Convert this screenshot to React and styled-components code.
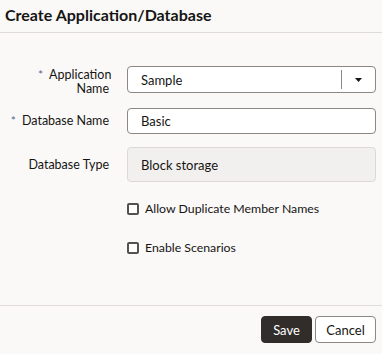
import styled, { createGlobalStyle } from 'styled-components';

const GlobalStyle = createGlobalStyle`
  html, body {
    margin: 0;
    padding: 0;
    background: #faf9f8;
  }
  body {
    font-family: Lato, 'Noto Sans', sans-serif;
    color: #161513;
  }
`;

const fields = [
  { label: 'Application Name', required: true, value: 'Sample', kind: 'select', wrap: true },
  { label: 'Database Name', required: true, value: 'Basic', kind: 'input' },
  { label: 'Database Type', required: false, value: 'Block storage', kind: 'readonly' },
];

const options = ['Allow Duplicate Member Names', 'Enable Scenarios'];

export default function App() {
  return (
    <>
      <GlobalStyle />
      <SDialog>
        <SHeader>
          <STitle>Create Application/Database</STitle>
        </SHeader>
        <SBody>
          {fields.map((field) => (
            <SRow key={field.label} $kind={field.kind}>
              <SLabel $wrap={field.wrap}>
                {field.required && <SStar>*</SStar>}
                <span>{field.label}</span>
              </SLabel>
              <SField $kind={field.kind}>
                <SValue>{field.value}</SValue>
                {field.kind === 'select' && (
                  <SDropButton>
                    <svg width="7" height="4" viewBox="0 0 7 4">
                      <path d="M0 0h7L3.5 4z" fill="#161513" />
                    </svg>
                  </SDropButton>
                )}
              </SField>
            </SRow>
          ))}
          <SChecks>
            {options.map((opt) => (
              <SCheckRow key={opt}>
                <SBox />
                <span>{opt}</span>
              </SCheckRow>
            ))}
          </SChecks>
        </SBody>
        <SFooter>
          <SButton $primary>Save</SButton>
          <SButton>Cancel</SButton>
        </SFooter>
      </SDialog>
    </>
  );
}

const heights = { select: '27px', input: '26px', readonly: '35px' };
const gaps = { select: '15px', input: '13px', readonly: '0' };

const SDialog = styled.div`
  width: 382px;
  height: 354px;
  display: flex;
  flex-direction: column;
`;

const SHeader = styled.div`
  height: 33px;
  padding: 0 5px;
  display: flex;
  align-items: center;
  border-bottom: 1px solid #dfdcd8;
  box-sizing: border-box;
`;

const STitle = styled.h1`
  margin: 0;
  margin-top: -3px;
  font-size: 16px;
  font-weight: 700;
`;

const SBody = styled.div`
  flex: 1;
  padding: 33px 6px 0 0;
  border-bottom: 1px solid #dfdcd8;
`;

const SRow = styled.div`
  display: grid;
  grid-template-columns: 109px 1fr;
  grid-template-rows: ${(p) => heights[p.$kind]};
  column-gap: 18px;
  align-items: center;
  margin-bottom: ${(p) => gaps[p.$kind]};
`;

const SLabel = styled.div`
  font-size: 12.5px;
  line-height: 14px;
  text-align: right;
  padding-left: ${(p) => (p.$wrap ? '38px' : '0')};
  align-self: ${(p) => (p.$wrap ? 'start' : 'center')};
  margin-top: ${(p) => (p.$wrap ? '2px' : '0')};
`;

const SStar = styled.span`
  color: #4f6b88;
  margin-right: 6px;
  font-size: 12px;
`;

const SField = styled.div`
  height: 100%;
  box-sizing: border-box;
  border: 1px solid ${(p) => (p.$kind === 'readonly' ? '#dcd9d5' : '#8b8782')};
  border-radius: 4px;
  background: ${(p) => (p.$kind === 'readonly' ? '#f2f0ee' : '#ffffff')};
  display: flex;
  align-items: center;
  padding-left: 13px;
`;

const SValue = styled.span`
  flex: 1;
  font-size: 13px;
`;

const SDropButton = styled.div`
  width: 33px;
  height: 19px;
  border-left: 1px solid #8b8782;
  display: flex;
  align-items: center;
  justify-content: center;
`;

const SChecks = styled.div`
  padding-left: 127px;
  padding-top: 19px;
  display: flex;
  flex-direction: column;
  gap: 24px;
`;

const SCheckRow = styled.label`
  display: flex;
  align-items: center;
  gap: 6px;
  font-size: 12.3px;
  line-height: 15px;
`;

const SBox = styled.span`
  width: 12px;
  height: 12px;
  box-sizing: border-box;
  border: 2px solid #55524e;
  border-radius: 2px;
  background: #fff;
`;

const SFooter = styled.div`
  height: 48px;
  display: flex;
  justify-content: flex-end;
  align-items: flex-start;
  gap: 3px;
  padding: 10px 6px 0 0;
  box-sizing: border-box;
`;

const SButton = styled.button`
  height: 27px;
  width: ${(p) => (p.$primary ? '51px' : '61px')};
  padding: 0;
  border-radius: 4px;
  font-family: inherit;
  font-size: 13px;
  border: 1px solid ${(p) => (p.$primary ? '#312d2a' : '#8b8782')};
  background: ${(p) => (p.$primary ? '#312d2a' : '#ffffff')};
  color: ${(p) => (p.$primary ? '#ffffff' : '#161513')};
`;
